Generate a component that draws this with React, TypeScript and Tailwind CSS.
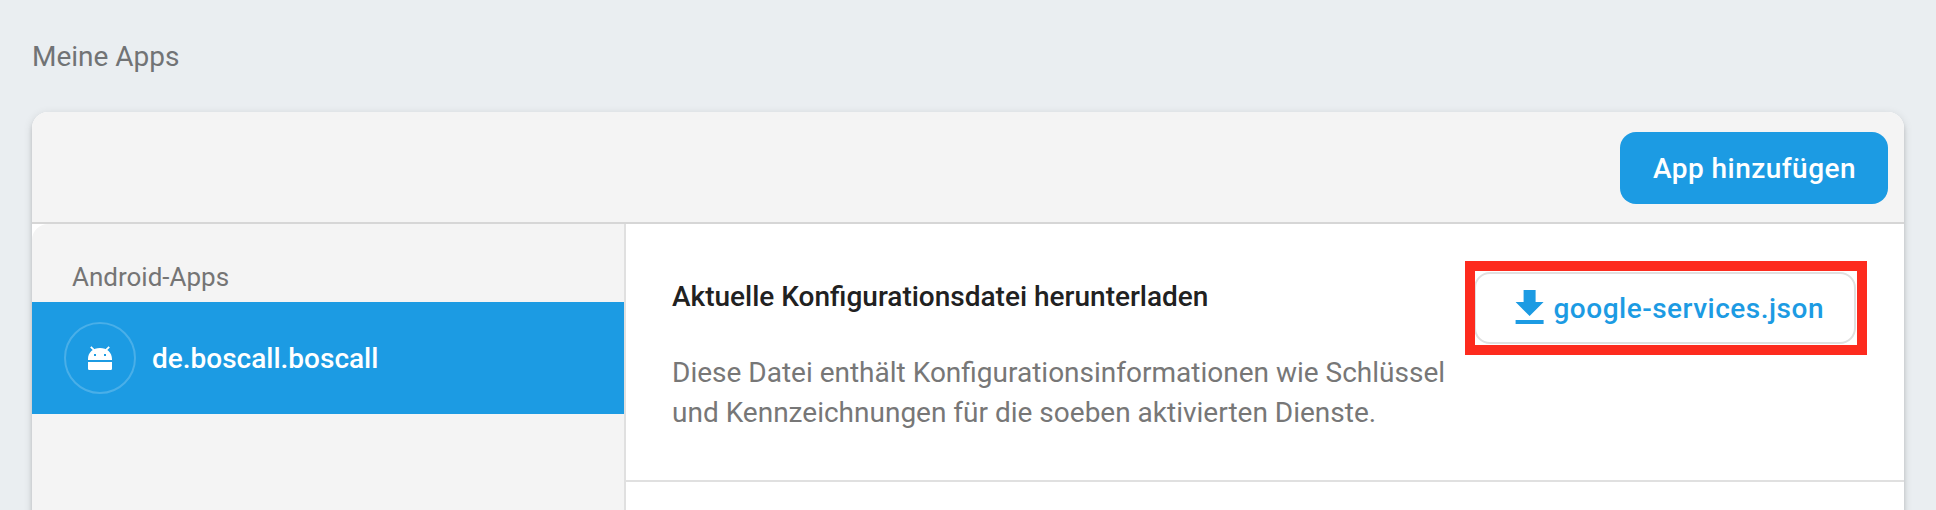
import React from "react";

function AndroidIcon() {
  return (
    <svg width="24" height="24" viewBox="0 0 24 24" fill="#fff" aria-hidden="true">
      <path d="M2.8 0.8L6.4 4.4M21.2 0.8L17.6 4.4" stroke="#fff" strokeWidth="1.8" />
      <path
        fillRule="evenodd"
        d="M0 14v-1C0 6.6 5 2 12 2s12 4.6 12 11v1H0zM6 8v2h2V8H6zM16 8v2h2V8h-2z"
      />
      <path d="M0 16h24v6.400c0 .9-.7 1.600-1.600 1.600H1.600C.7 24 0 23.300 0 22.400V16z" />
    </svg>
  );
}

function DownloadIcon() {
  return (
    <svg className="shrink-0" width="48" height="48" viewBox="0 0 24 24" fill="#1c9be3" aria-hidden="true">
      <path d="M18.8 9h-4V3h-6v6h-4l7 7 7-7zM4.8 18v2h14v-2h-14z" />
    </svg>
  );
}

function Sidebar() {
  return (
    <aside className="w-[594px] shrink-0 rounded-tl-2xl border-r-2 border-[#e0e0e0] bg-[#f4f4f4]">
      <div className="h-[78px] pl-10 pt-[33px] text-[26px] leading-10 text-[#757575]">Android-Apps</div>
      <div className="flex h-28 items-center gap-4 bg-[#1c9be3] pl-8">
        <div className="flex size-[72px] items-center justify-center rounded-full border-2 border-white/20">
          <AndroidIcon />
        </div>
        <span className="pt-0.5 text-[28px] font-medium leading-10 text-white">de.boscall.boscall</span>
      </div>
    </aside>
  );
}

function ConfigSection() {
  return (
    <section className="flex h-[258px] justify-between border-b-2 border-[#e0e0e0] pl-[46px] pr-[37px]">
      <div className="whitespace-nowrap pt-[53px] text-[28px] leading-10">
        <h2 className="font-medium text-[#212121]">Aktuelle Konfigurationsdatei herunterladen</h2>
        <p className="mt-9 text-[#777777]">
          Diese Datei enthält Konfigurationsinformationen wie Schlüssel
          <br />
          und Kennzeichnungen für die soeben aktivierten Dienste.
        </p>
      </div>
      <div className="mt-[37px] flex h-[94px] w-[402px] shrink-0 overflow-hidden border-[10px] border-[#fd2b1e]">
        <button className="-ml-px mt-px flex h-[72px] w-[382px] shrink-0 items-center whitespace-nowrap rounded-2xl border-2 border-[#e0e0e0] pl-[29.5px] text-[28px] font-medium tracking-[0.5px] text-[#1c9be3]">
          <DownloadIcon />
          <span className="pt-0.5">google-services.json</span>
        </button>
      </div>
    </section>
  );
}

export default function App() {
  return (
    <main className="h-[510px] overflow-hidden bg-[#eaeef1] px-8 pt-[37px] font-['Roboto',sans-serif]">
      <h1 className="text-[28px] leading-10 text-[#717375]">Meine Apps</h1>
      <div className="mt-[35px] flex h-[480px] flex-col overflow-hidden rounded-2xl bg-white shadow-[0_4px_4px_rgba(0,0,0,0.14),0_6px_2px_-4px_rgba(0,0,0,0.2),0_2px_10px_rgba(0,0,0,0.12)]">
        <header className="flex h-28 shrink-0 items-start justify-end border-b-2 border-[#d6d6d6] bg-[#f4f4f4] pr-4 pt-5">
          <button className="h-[72px] w-[268px] whitespace-nowrap rounded-2xl bg-[#1c9be3] pl-px pt-0.5 text-[28px] font-medium tracking-[0.45px] text-white">
            App hinzufügen
          </button>
        </header>
        <div className="flex flex-1">
          <Sidebar />
          <div className="flex-1">
            <ConfigSection />
          </div>
        </div>
      </div>
    </main>
  );
}
